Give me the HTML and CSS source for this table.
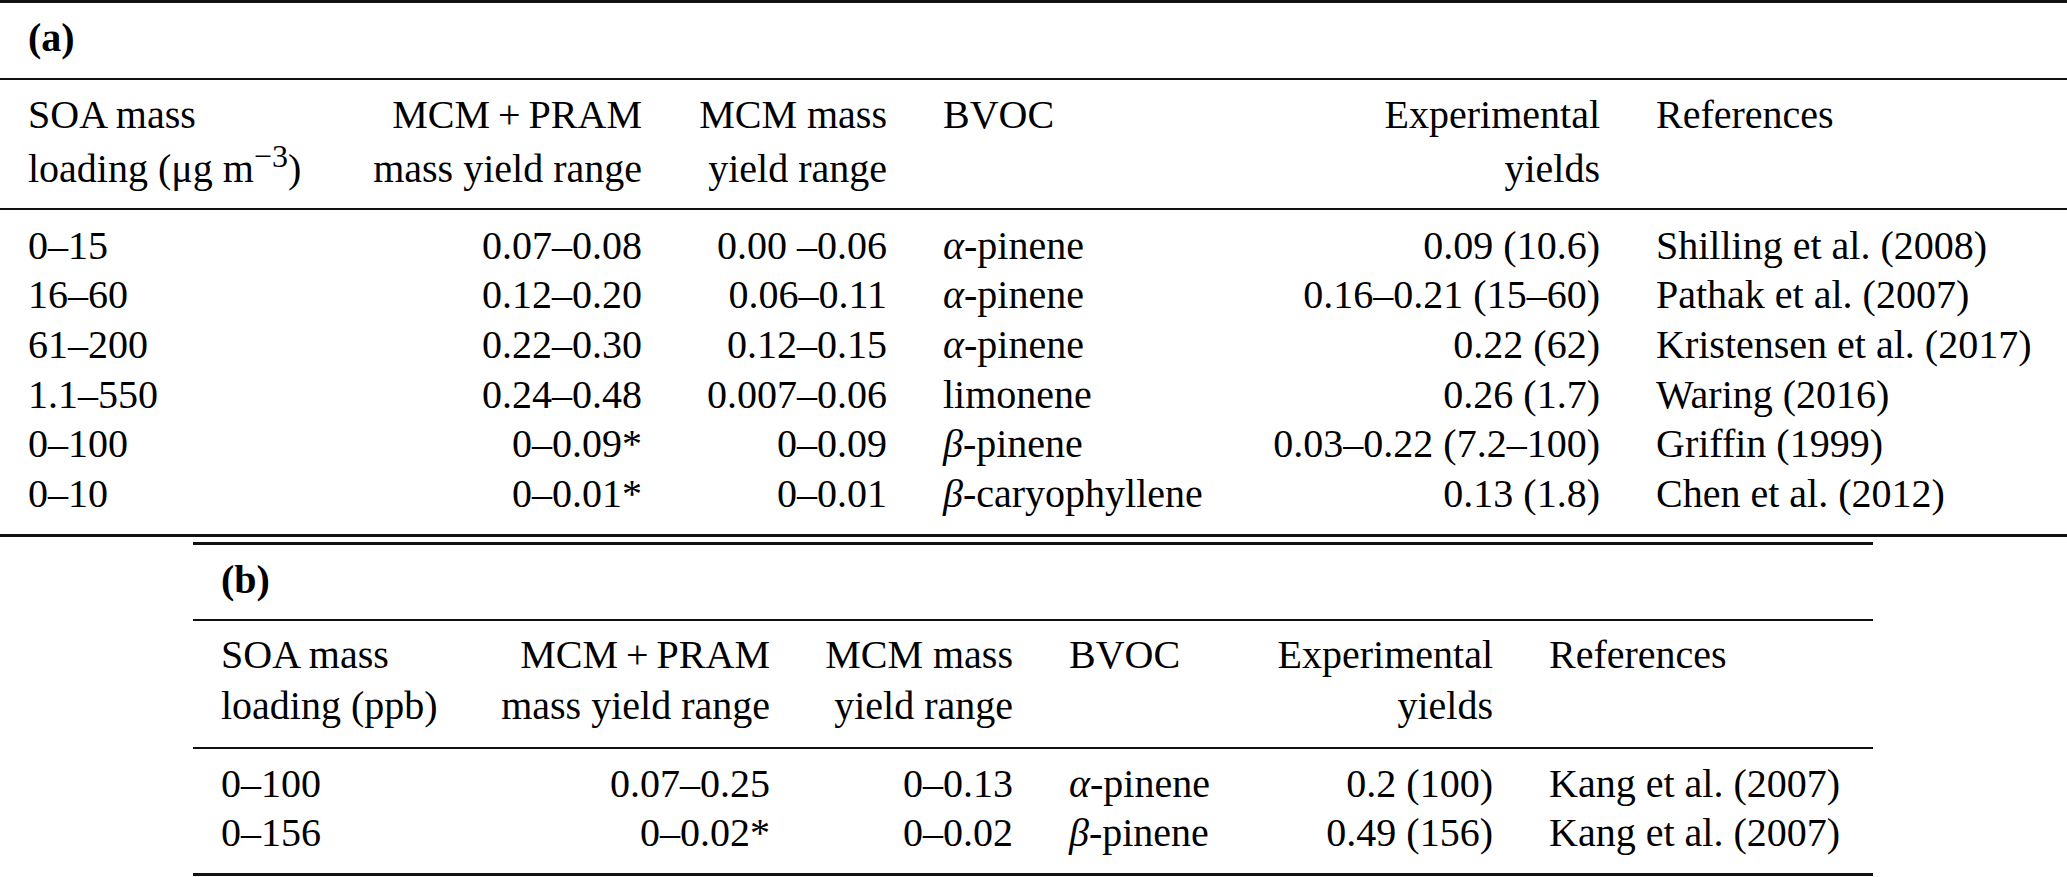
FILE: index.html
```html
<!DOCTYPE html>
<html lang="en">
<head>
<meta charset="utf-8">
<title>SOA mass yields</title>
<link rel="stylesheet" href="styles.css">
</head>
<body>
<table class="tbl tbl-a">
  <colgroup>
    <col class="a1"><col class="a2"><col class="a3"><col class="a4"><col class="a5"><col class="a6">
  </colgroup>
  <thead>
    <tr><th class="title" colspan="6">(a)</th></tr>
    <tr class="head">
      <th class="l">SOA mass<br>loading (μg m<span class="sup">−3</span>)</th>
      <th class="r">MCM&#8201;+&#8201;PRAM<br>mass yield range</th>
      <th class="r">MCM mass<br>yield range</th>
      <th class="l">BVOC</th>
      <th class="r">Experimental<br>yields</th>
      <th class="l">References</th>
    </tr>
  </thead>
  <tbody>
    <tr><td class="l">0–15</td><td class="r">0.07–0.08</td><td class="r">0.00 –0.06</td><td class="l"><i>α</i>-pinene</td><td class="r">0.09 (10.6)</td><td class="l">Shilling et al. (2008)</td></tr>
    <tr><td class="l">16–60</td><td class="r">0.12–0.20</td><td class="r">0.06–0.11</td><td class="l"><i>α</i>-pinene</td><td class="r">0.16–0.21 (15–60)</td><td class="l">Pathak et al. (2007)</td></tr>
    <tr><td class="l">61–200</td><td class="r">0.22–0.30</td><td class="r">0.12–0.15</td><td class="l"><i>α</i>-pinene</td><td class="r">0.22 (62)</td><td class="l">Kristensen et al. (2017)</td></tr>
    <tr><td class="l">1.1–550</td><td class="r">0.24–0.48</td><td class="r">0.007–0.06</td><td class="l">limonene</td><td class="r">0.26 (1.7)</td><td class="l">Waring (2016)</td></tr>
    <tr><td class="l">0–100</td><td class="r">0–0.09*</td><td class="r">0–0.09</td><td class="l"><i>β</i>-pinene</td><td class="r">0.03–0.22 (7.2–100)</td><td class="l">Griffin (1999)</td></tr>
    <tr><td class="l">0–10</td><td class="r">0–0.01*</td><td class="r">0–0.01</td><td class="l"><i>β</i>-caryophyllene</td><td class="r">0.13 (1.8)</td><td class="l">Chen et al. (2012)</td></tr>
  </tbody>
</table>

<table class="tbl tbl-b">
  <colgroup>
    <col class="b1"><col class="b2"><col class="b3"><col class="b4"><col class="b5"><col class="b6">
  </colgroup>
  <thead>
    <tr><th class="title" colspan="6">(b)</th></tr>
    <tr class="head">
      <th class="l">SOA mass<br>loading (ppb)</th>
      <th class="r">MCM&#8201;+&#8201;PRAM<br>mass yield range</th>
      <th class="r">MCM mass<br>yield range</th>
      <th class="l">BVOC</th>
      <th class="r">Experimental<br>yields</th>
      <th class="l">References</th>
    </tr>
  </thead>
  <tbody>
    <tr><td class="l">0–100</td><td class="r">0.07–0.25</td><td class="r">0–0.13</td><td class="l"><i>α</i>-pinene</td><td class="r">0.2 (100)</td><td class="l">Kang et al. (2007)</td></tr>
    <tr><td class="l">0–156</td><td class="r">0–0.02*</td><td class="r">0–0.02</td><td class="l"><i>β</i>-pinene</td><td class="r">0.49 (156)</td><td class="l">Kang et al. (2007)</td></tr>
  </tbody>
</table>
</body>
</html>
```

FILE: styles.css
```css
html, body {
  margin: 0;
  padding: 0;
  background: #ffffff;
  overflow: hidden;
}

body {
  color: #000000;
  font-family: "Liberation Serif", "Times New Roman", serif;
  font-size: 40px;
}

.tbl {
  border-collapse: separate;
  border-spacing: 0;
  table-layout: fixed;
  border-top: 3px solid #111111;
  border-bottom: 3px solid #111111;
}

.tbl-a {
  width: 2067px;
}

.tbl-b {
  width: 1680px;
  margin: 5px 0 0 193px;
}

/* column widths, table (a) */
.a1 { width: 345px; }
.a2 { width: 325px; }
.a3 { width: 245px; }
.a4 { width: 325px; }
.a5 { width: 388px; }
.a6 { width: 439px; }

/* column widths, table (b) */
.b1 { width: 277px; }
.b2 { width: 328px; }
.b3 { width: 243px; }
.b4 { width: 208px; }
.b5 { width: 272px; }
.b6 { width: 352px; }

.tbl th,
.tbl td {
  padding: 0;
  font-weight: normal;
  white-space: nowrap;
  vertical-align: top;
}

.tbl .l {
  text-align: left;
  padding-left: 28px;
}

.tbl .r {
  text-align: right;
  padding-right: 28px;
}

.tbl .title {
  font-weight: bold;
  text-align: left;
  line-height: 48px;
  padding-left: 28px;
  border-bottom: 2px solid #111111;
}

.tbl-a .title {
  padding-top: 10.5px;
  padding-bottom: 16.5px;
}

.tbl-b .title {
  padding-top: 11.5px;
  padding-bottom: 14.5px;
}

.head th {
  border-bottom: 2px solid #111111;
}

.tbl-a .head th {
  line-height: 54px;
  padding-top: 7.5px;
  padding-bottom: 12.5px;
}

.tbl-b .head th {
  line-height: 51px;
  padding-top: 8px;
  padding-bottom: 16px;
}

.tbl-a td {
  line-height: 49.6px;
}

.tbl-a tbody tr:first-child td {
  padding-top: 10.75px;
}

.tbl-a tbody tr:last-child td {
  padding-bottom: 15.65px;
}

.tbl-b td {
  line-height: 49px;
}

.tbl-b tbody tr:first-child td {
  padding-top: 10px;
}

.tbl-b tbody tr:last-child td {
  padding-bottom: 16px;
}

.sup {
  font-size: 0.8em;
  line-height: 0;
  vertical-align: 15px;
}

i {
  font-style: italic;
}
```
